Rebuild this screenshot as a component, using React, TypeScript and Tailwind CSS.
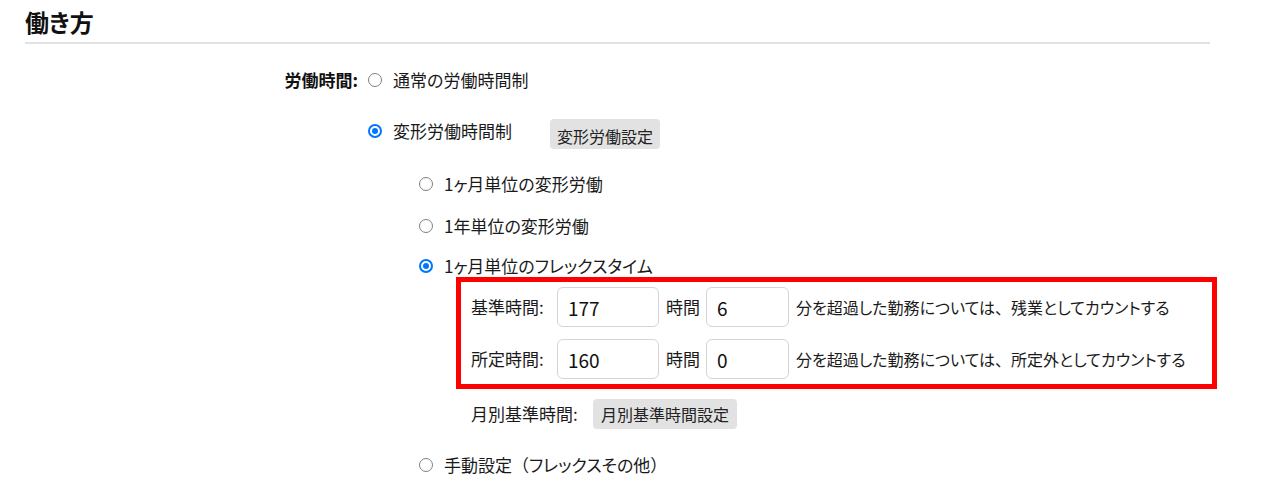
import React from "react";

const font = "font-['Noto_Sans_CJK_JP','Noto_Sans',sans-serif] [font-feature-settings:'palt']";
const full = "[font-feature-settings:normal]";

function Radio({ checked }: { checked?: boolean }) {
  if (checked) {
    return (
      <span className="w-[14px] h-[14px] shrink-0 rounded-full border-2 border-[#0075ff] bg-white flex items-center justify-center">
        <span className="w-[6px] h-[6px] rounded-full bg-[#0075ff]" />
      </span>
    );
  }
  return <span className="w-[14px] h-[14px] shrink-0 rounded-full border border-[#808080] bg-white" />;
}

const inputCls =
  "h-[40px] border border-[#d4d4d4] rounded-[6px] px-[10px] text-[19px] text-[#111] outline-none bg-white";

export default function App() {
  return (
    <div className={`w-full h-[483px] bg-white text-[#1a1a1a] overflow-hidden ${font}`}>
      <div className="ml-[25px] mr-[70px] pt-[6px] pb-[4px] border-b-2 border-[#e2e2e2]">
        <h1 className="h-[32px] leading-[32px] text-[24px] font-bold text-[#111]">働き方</h1>
      </div>

      <div className="flex mt-[24px] text-[17px]">
        <div className="w-[358px] shrink-0 text-right font-bold h-[24px] leading-[24px] text-[#111]">労働時間:</div>
        <div className="flex flex-col pl-[10px]">
          <label className="flex items-center h-[24px] gap-[11px]">
            <Radio />
            <span>通常の労働時間制</span>
          </label>

          <div className="flex items-start mt-[27px] h-[30px]">
            <label className="flex items-center h-[24px] gap-[11px]">
              <Radio checked />
              <span>変形労働時間制</span>
            </label>
            <button className="ml-[38px] h-[30px] px-[7px] rounded-[4px] bg-[#e2e2e2] text-[16px] leading-[30px] pt-[2px] text-[#222]">
              変形労働設定
            </button>
          </div>

          <div className="flex flex-col ml-[51px]">
            <label className="flex items-center h-[24px] mt-[23px] gap-[11px]">
              <Radio />
              <span>1ヶ月単位の変形労働</span>
            </label>
            <label className="flex items-center h-[24px] mt-[18px] gap-[11px]">
              <Radio />
              <span>1年単位の変形労働</span>
            </label>
            <label className="flex items-center h-[23px] mt-[16px] gap-[11px]">
              <Radio checked />
              <span>1ヶ月単位のフレックスタイム</span>
            </label>

            <div className="ml-[37px] w-[761px] border-[5px] border-[#ff0000] pl-[10px] pt-[5px] pb-[5px] flex flex-col gap-[12px]">
              <div className="flex items-center h-[40px]">
                <span className="w-[77px]">基準時間:</span>
                <input defaultValue="177" className={`ml-[9px] w-[102px] ${inputCls}`} />
                <span className="ml-[7px]">時間</span>
                <input defaultValue="6" className={`ml-[6px] w-[83px] ${inputCls}`} />
                <span className="ml-[7px] text-[16px]">
                  分を超過した勤務については<span className={full}>、</span>残業としてカウントする
                </span>
              </div>
              <div className="flex items-center h-[40px]">
                <span className="w-[77px]">所定時間:</span>
                <input defaultValue="160" className={`ml-[9px] w-[102px] ${inputCls}`} />
                <span className="ml-[7px]">時間</span>
                <input defaultValue="0" className={`ml-[6px] w-[83px] ${inputCls}`} />
                <span className="ml-[7px] text-[16px]">
                  分を超過した勤務については<span className={full}>、</span>所定外としてカウントする
                </span>
              </div>
            </div>

            <div className="flex items-center ml-[52px] mt-[10px] h-[30px]">
              <span className="w-[114px]">月別基準時間:</span>
              <button className="ml-[8px] h-[30px] px-[8px] rounded-[4px] bg-[#e2e2e2] text-[16px] leading-[30px] text-[#222]">
                月別基準時間設定
              </button>
            </div>

            <label className="flex items-center h-[24px] mt-[24px] gap-[11px]">
              <Radio />
              <span>
                手動設定<span className={full}>（</span>フレックスその他<span className={full}>）</span>
              </span>
            </label>
          </div>
        </div>
      </div>
    </div>
  );
}
